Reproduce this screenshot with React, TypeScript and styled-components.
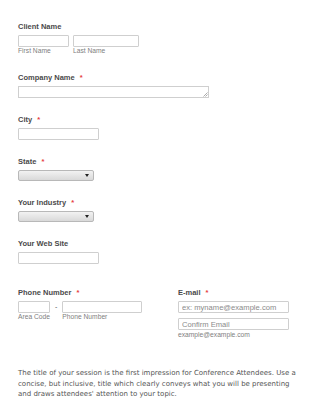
import { createGlobalStyle, styled } from 'styled-components';

const GlobalStyle = createGlobalStyle`
  html, body {
    margin: 0;
    padding: 0;
    background: #ffffff;
  }
  body {
    font-family: 'Liberation Sans', Arial, sans-serif;
  }
`;

function App() {
  return (
    <>
      <GlobalStyle />
      <Form>
        <Field $spaceAfter={1}>
          <Label>Client Name</Label>
          <Row>
            <SubField>
              <TextInput $width={51} />
              <SubLabel>First Name</SubLabel>
            </SubField>
            <SubField>
              <TextInput $width={66} />
              <SubLabel>Last Name</SubLabel>
            </SubField>
          </Row>
        </Field>

        <Field>
          <Label>
            Company Name <Required>*</Required>
          </Label>
          <TextArea>
            <Grip viewBox="0 0 6 6">
              <path d="M5.5 1.5 L1.5 5.5 M5.5 3.5 L3.5 5.5" stroke="#888" strokeWidth="0.7" />
            </Grip>
          </TextArea>
        </Field>

        <Field>
          <Label>
            City <Required>*</Required>
          </Label>
          <TextInput $width={81} />
        </Field>

        <Field>
          <Label>
            State <Required>*</Required>
          </Label>
          <Select />
        </Field>

        <Field>
          <Label>
            Your Industry <Required>*</Required>
          </Label>
          <Select />
        </Field>

        <Field>
          <Label>Your Web Site</Label>
          <TextInput $width={81} />
        </Field>

        <Columns>
          <Field>
            <Label>
              Phone Number <Required>*</Required>
            </Label>
            <Row>
              <SubField>
                <TextInput $width={32} />
                <SubLabel>Area Code</SubLabel>
              </SubField>
              <Dash>-</Dash>
              <SubField>
                <TextInput $width={80} />
                <SubLabel>Phone Number</SubLabel>
              </SubField>
            </Row>
          </Field>

          <Field>
            <Label>
              E-mail <Required>*</Required>
            </Label>
            <EmailStack>
              <TextInput $width={111} placeholder="ex: myname@example.com" readOnly />
              <TextInput $width={111} placeholder="Confirm Email" readOnly />
            </EmailStack>
            <SubLabel>example@example.com</SubLabel>
          </Field>
        </Columns>

        <Description>
          The title of your session is the first impression for Conference
          Attendees. Use a concise, but inclusive, title which clearly conveys
          what you will be presenting and draws attendees' attention to your
          topic.
        </Description>
      </Form>
    </>
  );
}

const Form = styled.div`
  display: flex;
  flex-direction: column;
  gap: 17px;
  padding: 22px 0 0 18px;
  width: 325px;
  box-sizing: border-box;
`;

const Field = styled.div<{ $spaceAfter?: number }>`
  display: flex;
  flex-direction: column;
  align-items: flex-start;
  margin-bottom: ${(p) => p.$spaceAfter ?? 0}px;
`;

const Label = styled.div`
  font-size: 7.5px;
  line-height: 9px;
  font-weight: bold;
  color: #4a4a4a;
  margin-bottom: 4px;
`;

const Required = styled.span`
  color: #e63c3c;
  margin-left: 3px;
`;

const Row = styled.div`
  display: flex;
  align-items: flex-start;
  gap: 4px;
`;

const SubField = styled.div`
  display: flex;
  flex-direction: column;
`;

const SubLabel = styled.div`
  font-size: 6.7px;
  line-height: 8px;
  color: #808080;
`;

const TextInput = styled.input<{ $width: number }>`
  width: ${(p) => p.$width}px;
  height: 12px;
  box-sizing: border-box;
  border: 1px solid #cfcfcf;
  border-radius: 1px;
  background: #ffffff;
  padding: 0 3px;
  margin: 0;
  font-family: 'Liberation Sans', Arial, sans-serif;
  font-size: 7.6px;
  outline: none;

  &::placeholder {
    color: #8a8a8a;
  }
`;

const TextArea = styled.div`
  position: relative;
  width: 191px;
  height: 12px;
  box-sizing: border-box;
  border: 1px solid #cfcfcf;
  background: #ffffff;
`;

const Grip = styled.svg`
  position: absolute;
  right: 0;
  bottom: 0;
  width: 6px;
  height: 6px;
`;

const Select = styled.div`
  position: relative;
  width: 76px;
  height: 11px;
  box-sizing: border-box;
  border: 1px solid #b8b8b8;
  border-radius: 2px;
  background: linear-gradient(#f2f2f2, #d9d9d9);

  &::after {
    content: '';
    position: absolute;
    right: 4px;
    top: 3px;
    border-left: 2px solid transparent;
    border-right: 2px solid transparent;
    border-top: 3px solid #222;
  }
`;

const Columns = styled.div`
  display: grid;
  grid-template-columns: 160px 1fr;
  margin-top: 7px;
`;

const Dash = styled.span`
  font-size: 7px;
  line-height: 12px;
  color: #555;
  margin: 0 1px;
`;

const EmailStack = styled.div`
  display: flex;
  flex-direction: column;
  gap: 5px;
  margin-bottom: 1px;
`;

const Description = styled.p`
  margin: 12px 0 0;
  width: 285px;
  font-family: 'DejaVu Sans', Verdana, sans-serif;
  font-size: 7px;
  line-height: 10.5px;
  color: #555555;
`;

export default App;
